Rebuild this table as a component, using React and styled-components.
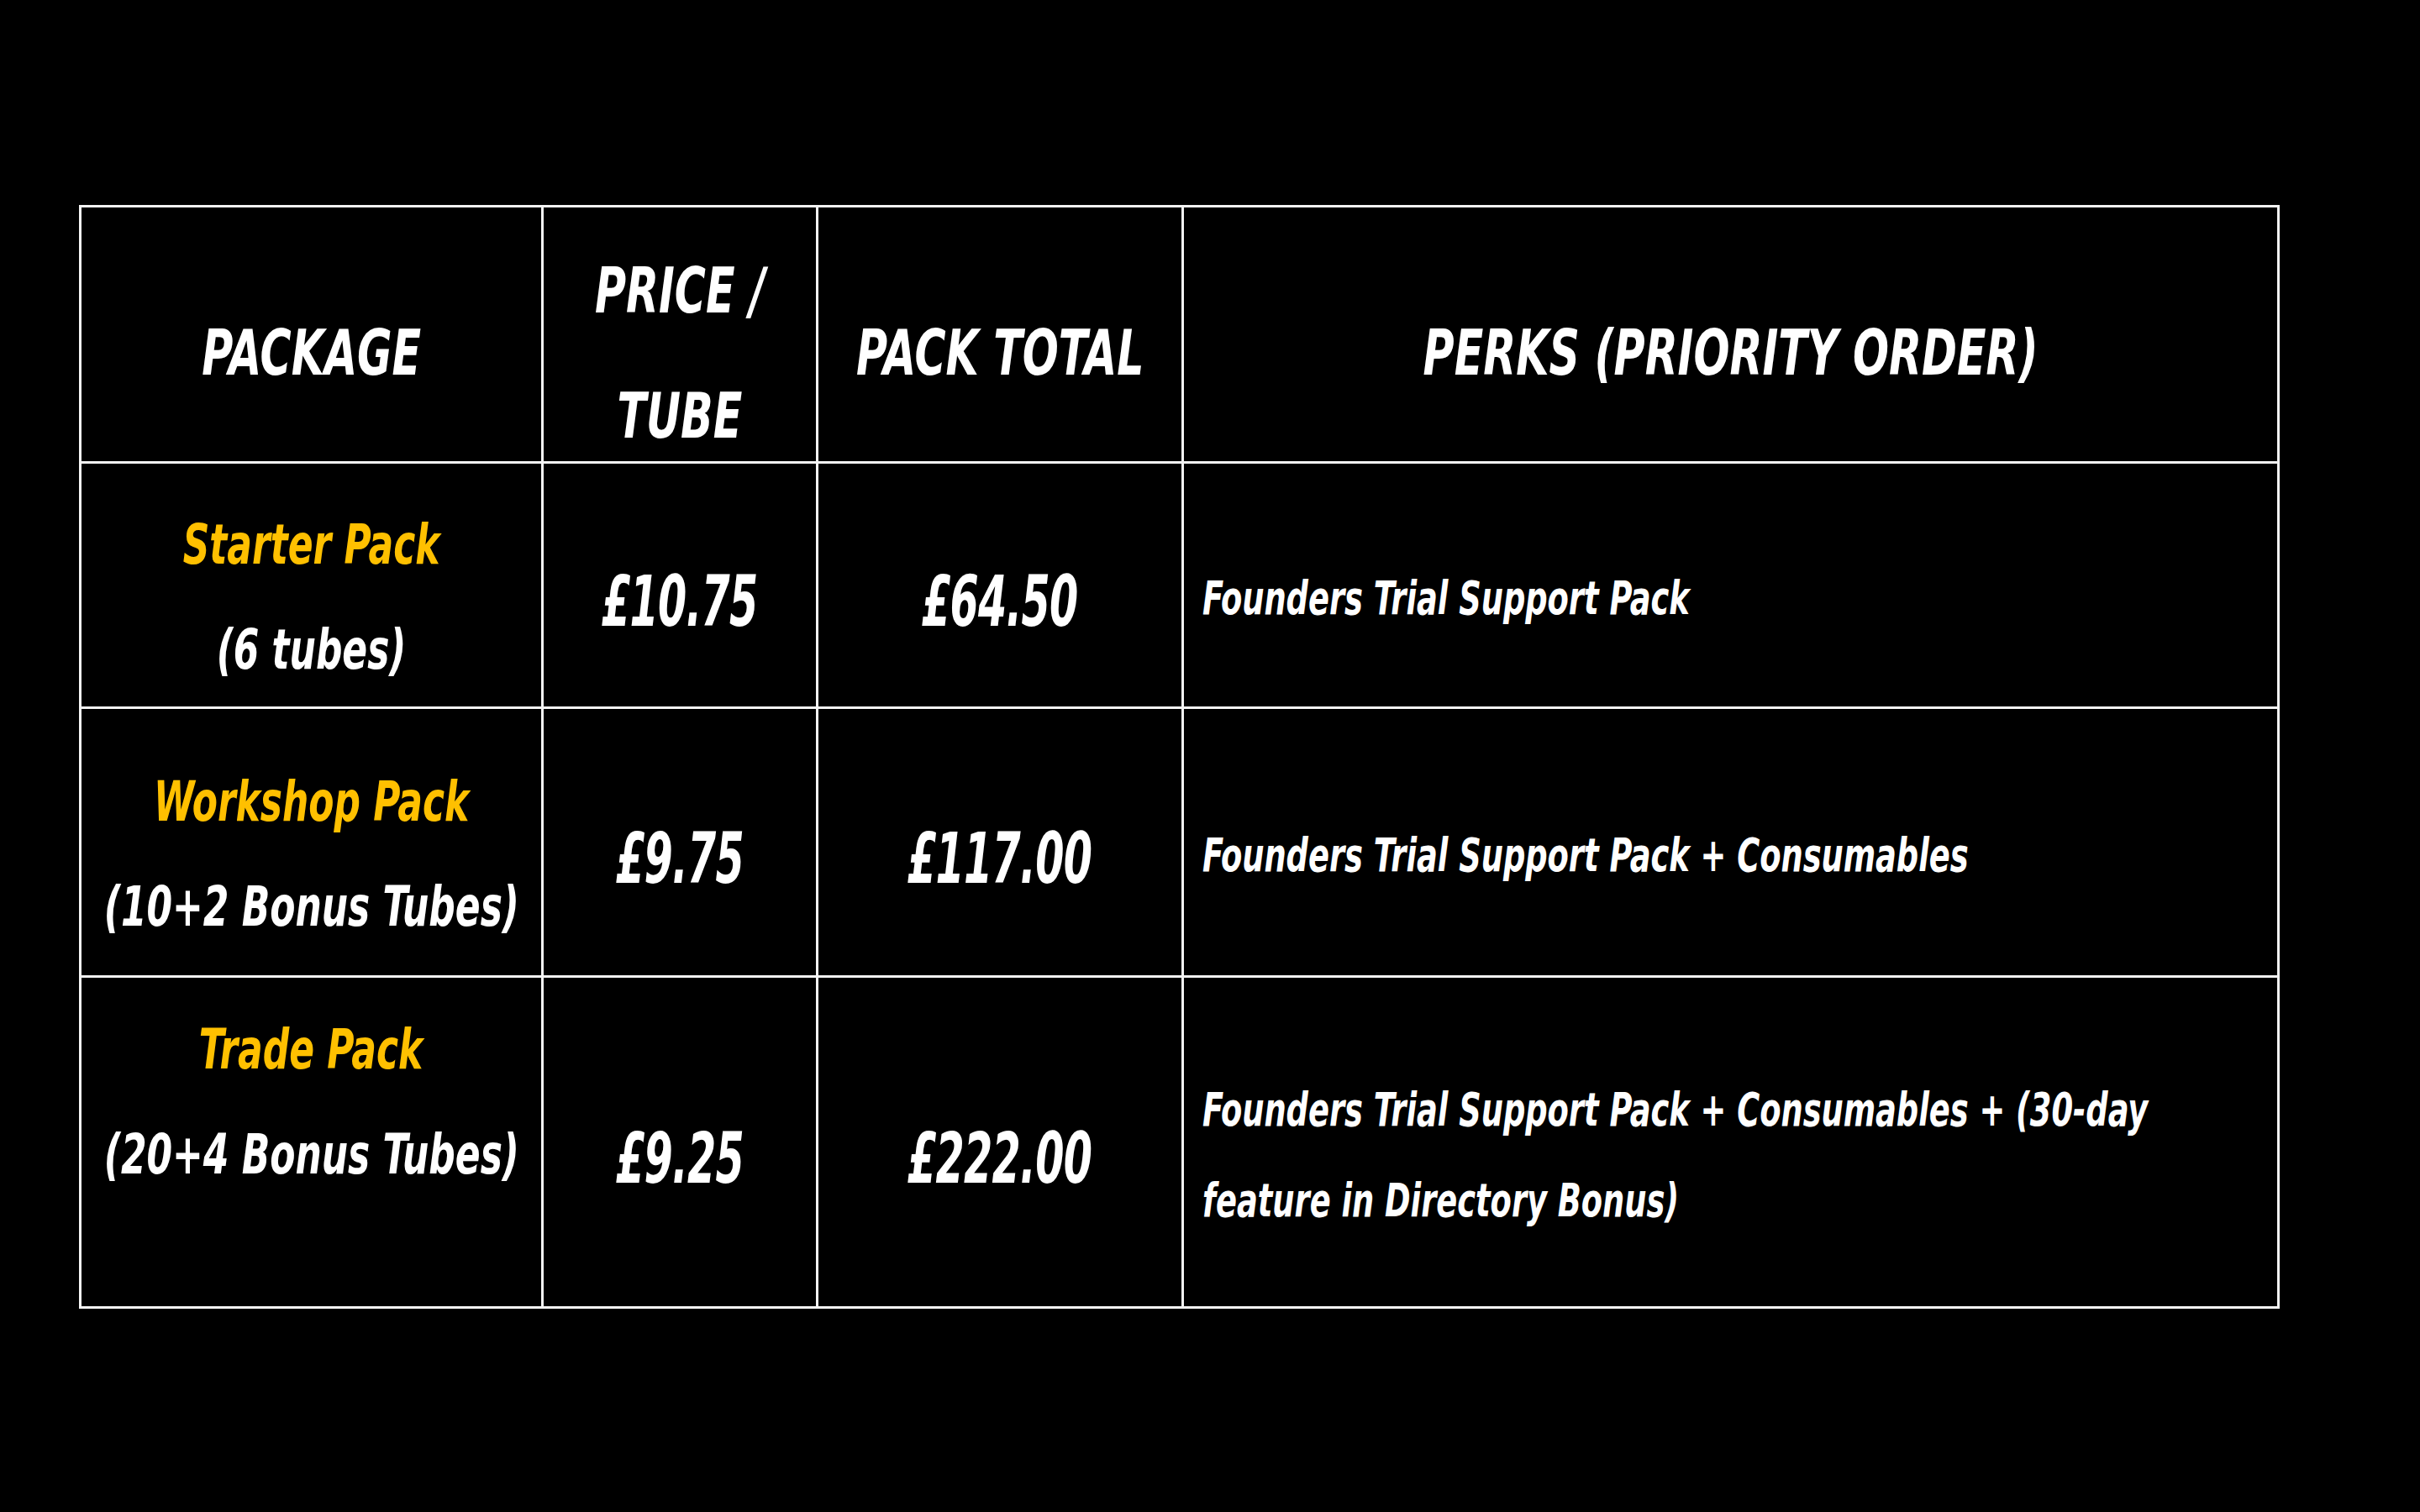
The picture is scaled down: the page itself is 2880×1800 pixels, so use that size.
import React from "react";
import styled, { createGlobalStyle } from "styled-components";

const GlobalStyle = createGlobalStyle`
  html, body {
    margin: 0;
    padding: 0;
    background: #000;
  }
  body {
    width: 2880px;
    height: 1800px;
    font-family: "DejaVu Sans Condensed", "Liberation Sans", sans-serif;
    color: #fff;
  }
`;

// the source font is a tight condensed face; squeeze the text horizontally
const HEAD_X = 0.76;
const PACK_X = 0.74;
const PRICE_X = 0.65;
const PERK_X = 0.73;

const packs = [
  {
    name: "Starter Pack",
    detail: "(6 tubes)",
    price: "£10.75",
    total: "£64.50",
    perks: ["Founders Trial Support Pack"],
    height: 292,
  },
  {
    name: "Workshop Pack",
    detail: "(10+2 Bonus Tubes)",
    price: "£9.75",
    total: "£117.00",
    perks: ["Founders Trial Support Pack + Consumables"],
    height: 320,
  },
  {
    name: "Trade Pack",
    detail: "(20+4 Bonus Tubes)",
    price: "£9.25",
    total: "£222.00",
    perks: [
      "Founders Trial Support Pack + Consumables + (30-day",
      "feature in Directory Bonus)",
    ],
    height: 394,
    trailingLine: true,
  },
];

const App = () => {
  return (
    <>
      <GlobalStyle />
      <Page>
        <PriceTable>
          <colgroup>
            <col style={{ width: 550 }} />
            <col style={{ width: 327 }} />
            <col style={{ width: 435 }} />
            <col style={{ width: 1304 }} />
          </colgroup>
          <thead>
            <Row $height={305}>
              <HeadCell>
                <HeadStack>
                  <Squeeze $x={HEAD_X}>PACKAGE</Squeeze>
                </HeadStack>
              </HeadCell>
              <HeadCell>
                <HeadStack>
                  <Squeeze $x={HEAD_X}>PRICE /</Squeeze>
                  <Squeeze $x={HEAD_X}>TUBE</Squeeze>
                </HeadStack>
              </HeadCell>
              <HeadCell>
                <HeadStack>
                  <Squeeze $x={HEAD_X}>PACK TOTAL</Squeeze>
                </HeadStack>
              </HeadCell>
              <HeadCell>
                <HeadStack>
                  <Squeeze $x={HEAD_X}>PERKS (PRIORITY ORDER)</Squeeze>
                </HeadStack>
              </HeadCell>
            </Row>
          </thead>
          <tbody>
            {packs.map((p) => (
              <Row key={p.name} $height={p.height}>
                <BodyCell>
                  <PackStack>
                    <PackLine $accent>
                      <Squeeze $x={PACK_X}>{p.name}</Squeeze>
                    </PackLine>
                    <PackLine>
                      <Squeeze $x={PACK_X}>{p.detail}</Squeeze>
                    </PackLine>
                    {p.trailingLine && <PackLine>&nbsp;</PackLine>}
                  </PackStack>
                </BodyCell>
                <PriceCell>
                  <Price>
                    <Squeeze $x={PRICE_X}>{p.price}</Squeeze>
                  </Price>
                </PriceCell>
                <PriceCell>
                  <Price>
                    <Squeeze $x={PRICE_X}>{p.total}</Squeeze>
                  </Price>
                </PriceCell>
                <PerksCell>
                  <PerkStack>
                    {p.perks.map((line) => (
                      <PerkLine key={line}>
                        <Squeeze $x={PERK_X} $origin="left">
                          {line}
                        </Squeeze>
                      </PerkLine>
                    ))}
                  </PerkStack>
                </PerksCell>
              </Row>
            ))}
          </tbody>
        </PriceTable>
      </Page>
    </>
  );
};

const Page = styled.div`
  padding: 244px 0 0 94px;
`;

const PriceTable = styled.table`
  border-collapse: collapse;
  table-layout: fixed;
  width: 2616px;
  font-weight: 700;
  font-style: italic;

  td,
  th {
    border: 3px solid #f4f4f4;
    padding: 0;
    overflow: visible;
  }
`;

const Row = styled.tr`
  height: ${(p) => p.$height}px;
`;

const Squeeze = styled.span`
  display: inline-block;
  white-space: nowrap;
  transform: scaleX(${(p) => p.$x});
  transform-origin: ${(p) => p.$origin || "center"} center;
`;

const HeadCell = styled.th`
  vertical-align: middle;
  padding-top: 44px !important;
`;

const HeadStack = styled.div`
  display: flex;
  flex-direction: column;
  align-items: center;
  gap: 75px;
  font-size: 74px;
  line-height: 74px;
`;

const BodyCell = styled.td`
  vertical-align: middle;
  padding-top: 30px !important;
`;

const PackStack = styled.div`
  display: flex;
  flex-direction: column;
  align-items: center;
  gap: 59px;
`;

const PackLine = styled.div`
  font-size: 66px;
  line-height: 66px;
  white-space: nowrap;
  color: ${(p) => (p.$accent ? "#ffc000" : "#fff")};
`;

const PriceCell = styled.td`
  vertical-align: middle;
  padding-top: 38px !important;
`;

const Price = styled.div`
  display: flex;
  justify-content: center;
  font-size: 84px;
  line-height: 84px;
  letter-spacing: -1px;
`;

const PerksCell = styled.td`
  vertical-align: middle;
  padding: 30px 0 0 22px !important;
`;

const PerkStack = styled.div`
  display: flex;
  flex-direction: column;
  gap: 52px;
`;

const PerkLine = styled.div`
  font-size: 56px;
  line-height: 56px;
  white-space: nowrap;
`;

export default App;
